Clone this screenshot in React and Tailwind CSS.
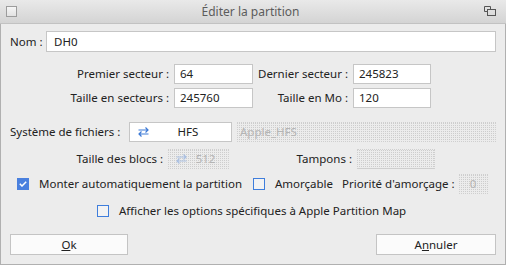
import React from "react";

const font = { fontFamily: '"Noto Sans", "Open Sans", sans-serif' };

function SyncIcon({ color = "#3d7ad6" }) {
  return (
    <svg width="11" height="10" viewBox="0 0 11 10" fill="none" stroke={color} strokeWidth="1.2" className="shrink-0">
      <path d="M0.5 3 H10 M7.5 0.5 L10 3 L7.5 5.5" />
      <path d="M10.5 7 H1 M3.5 4.5 L1 7 L3.5 9.5" />
    </svg>
  );
}

const Input = ({ value, className = "" }) => (
  <div className={"h-[20px] shrink-0 bg-white border border-[#c6c6c6] flex items-center pl-[5px] text-[#222] " + className}>
    {value}
  </div>
);

const Disabled = ({ children, className = "" }) => (
  <div
    className={
      "h-[20px] shrink-0 border border-dotted border-[#cfcfcf] bg-[repeating-conic-gradient(#cdcdcd_0_25%,#ececec_0_100%)] bg-[length:2px_2px] flex items-center text-[#b4b4b4] " +
      className
    }
  >
    {children}
  </div>
);

const Checkbox = ({ checked }) =>
  checked ? (
    <div className="w-[12px] h-[12px] bg-[#4a80de] flex items-center justify-center shrink-0">
      <svg width="8" height="6" viewBox="0 0 8 6" fill="none" stroke="white" strokeWidth="1.5">
        <path d="M0.8 2.8 L3 5 L7.2 0.8" />
      </svg>
    </div>
  ) : (
    <div className="w-[12px] h-[12px] border border-[#3f7edc] bg-[#f3f3f3] shrink-0" />
  );

export default function App() {
  return (
    <div className="w-[506px] h-[265px] flex flex-col bg-[#ececec] text-[#222] text-[11.5px] whitespace-nowrap overflow-hidden" style={font}>
      <div className="h-[24px] shrink-0 bg-[linear-gradient(#e9e9e9,#d4d4d4)] border-b border-[#c2c2c2] flex items-center px-[6px]">
        <div className="w-[11px] h-[11px] border border-[#9c9c9c] bg-[linear-gradient(#f6f6f6,#e2e2e2)]" />
        <div className="flex-1 text-center text-[12px] text-[#5c5c5c]">Éditer la partition</div>
        <svg width="13" height="11" viewBox="0 0 13 11" fill="none" stroke="#555" strokeWidth="1" className="mr-[3px]">
          <path d="M0.5 0.5 H6.5 V3.5 M0.5 0.5 V5.5 H3.5" />
          <rect x="3.5" y="3.5" width="8" height="6" />
        </svg>
      </div>
      <div className="flex-1 flex flex-col border-l border-r border-b border-[#b0b0b0] px-[9px]">
        <div className="flex items-center mt-[7px]">
          <span className="w-[36px] shrink-0">Nom :</span>
          <div className="h-[21px] flex-1 bg-white border border-[#c6c6c6] flex items-center pl-[7px]">DH0</div>
        </div>

        <div className="flex items-center mt-[12px]">
          <span className="w-[164px] shrink-0 text-right pr-[5px]">Premier secteur :</span>
          <Input value="64" className="w-[79px]" />
          <span className="w-[100px] shrink-0 text-right pr-[5px]">Dernier secteur :</span>
          <Input value="245823" className="w-[78px]" />
        </div>
        <div className="flex items-center mt-[4px]">
          <span className="w-[164px] shrink-0 text-right pr-[5px]">Taille en secteurs :</span>
          <Input value="245760" className="w-[79px]" />
          <span className="w-[100px] shrink-0 text-right pr-[5px]">Taille en Mo :</span>
          <Input value="120" className="w-[78px]" />
        </div>

        <div className="flex items-center mt-[14px]">
          <span className="w-[119px] shrink-0">Système de fichiers :</span>
          <div className="w-[103px] shrink-0 h-[20px] bg-white border border-[#c6c6c6] flex items-center pl-[8px]">
            <SyncIcon />
            <span className="flex-1 text-center pr-[4px]">HFS</span>
          </div>
          <Disabled className="ml-[5px] flex-1 shrink pl-[2px]">Apple_HFS</Disabled>
        </div>
        <div className="flex items-center mt-[7px]">
          <span className="w-[158px] shrink-0 text-right pr-[5px]">Taille des blocs :</span>
          <Disabled className="w-[61px] pl-[7px]">
            <SyncIcon color="#a9bfe2" />
            <span className="flex-1 text-center pr-[4px]">512</span>
          </Disabled>
          <span className="w-[128px] shrink-0 text-right pr-[5px]">Tampons :</span>
          <Disabled className="w-[78px]" />
        </div>

        <div className="flex items-center mt-[5px] h-[20px]">
          <div className="ml-[7px] shrink-0"><Checkbox checked /></div>
          <span className="ml-[10px] shrink-0">Monter automatiquement la partition</span>
          <div className="ml-[11px] shrink-0"><Checkbox /></div>
          <span className="ml-[10px] shrink-0">Amorçable</span>
          <span className="ml-[9px] shrink-0">Priorité d'amorçage :</span>
          <Disabled className="ml-[4px] w-[29px] justify-center">0</Disabled>
        </div>
        <div className="flex items-center mt-[7px] h-[20px]">
          <div className="ml-[87px] shrink-0"><Checkbox /></div>
          <span className="ml-[10px]">Afficher les options spécifiques à Apple Partition Map</span>
        </div>

        <div className="flex items-center justify-between mt-[13px]">
          <div className="w-[118px] h-[21px] bg-[#fbfbfb] border border-[#c4c4c4] flex items-center justify-center">
            <span><span className="underline">O</span>k</span>
          </div>
          <div className="w-[120px] h-[21px] bg-[#fbfbfb] border border-[#c4c4c4] flex items-center justify-center">
            <span>A<span className="underline">n</span>nuler</span>
          </div>
        </div>
      </div>
    </div>
  );
}
